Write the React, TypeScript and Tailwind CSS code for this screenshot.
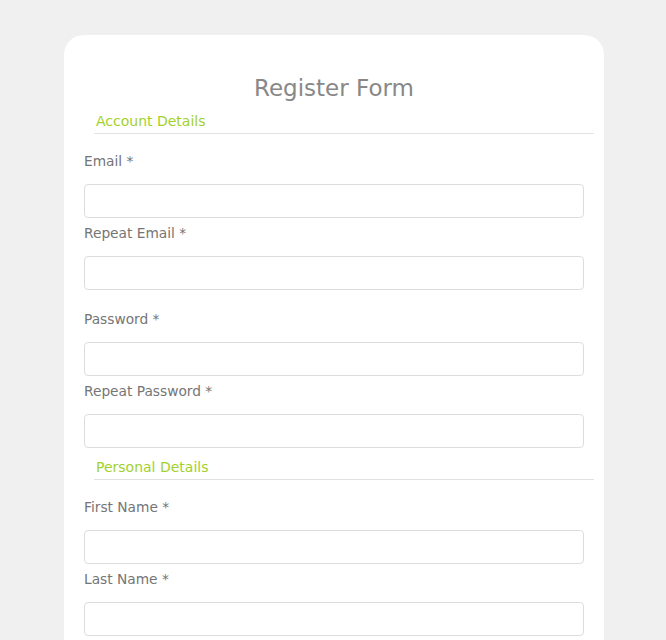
import React from "react";

function Field({ label }: { label: string }) {
  return (
    <div>
      <label className="block text-[13.75px] leading-[18px] text-[#757575] mb-[14px]">{label}</label>
      <input
        type="text"
        className="block w-full h-[34px] rounded-[4px] border border-[#dddddd] bg-white outline-none"
      />
    </div>
  );
}

function Legend({ text }: { text: string }) {
  return (
    <div className="ml-[10px] mr-[-10px] border-b border-[#e2e2e2] pb-[3px]">
      <span className="block pl-[2px] text-[14px] leading-[18px] text-[#a3d12c]">{text}</span>
    </div>
  );
}

export default function App() {
  return (
    <div
      className="min-h-screen bg-[#f0f0f0] pt-[35px]"
      style={{ fontFamily: '"DejaVu Sans", Verdana, sans-serif' }}
    >
      <div className="ml-[64px] w-[540px] rounded-t-[20px] bg-white px-[20px] pt-[40px] pb-[40px]">
        <h1 className="text-center text-[23px] leading-[26px] text-[#888888] font-normal">Register Form</h1>
        <div className="mt-[11px]">
          <Legend text="Account Details" />
          <div className="mt-[18px] flex flex-col gap-[6px]">
            <Field label="Email *" />
            <Field label="Repeat Email *" />
          </div>
          <div className="mt-[20px] flex flex-col gap-[6px]">
            <Field label="Password *" />
            <Field label="Repeat Password *" />
          </div>
        </div>
        <div className="mt-[10px]">
          <Legend text="Personal Details" />
          <div className="mt-[18px] flex flex-col gap-[6px]">
            <Field label="First Name *" />
            <Field label="Last Name *" />
          </div>
        </div>
      </div>
    </div>
  );
}
